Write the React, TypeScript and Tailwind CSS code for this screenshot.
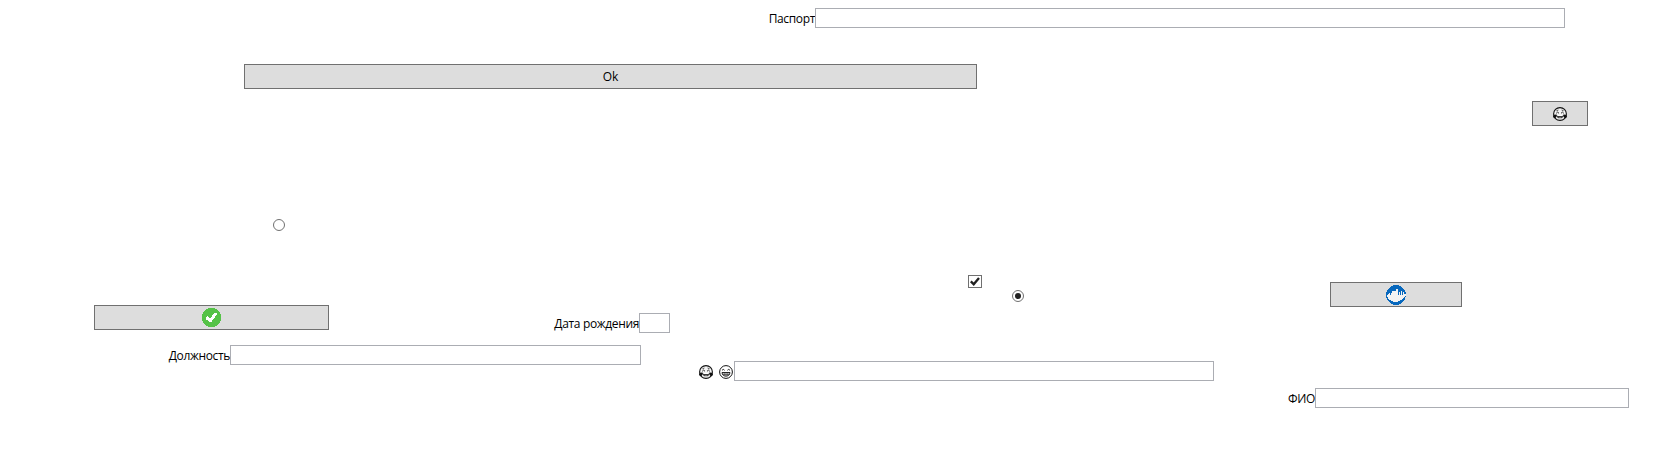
import type { ReactNode } from "react";

function Button({ className, children }: { className: string; children: ReactNode }) {
  return (
    <button className={`flex h-[25px] shrink-0 items-center justify-center border border-[#707070] bg-[#dddddd] ${className}`}>
      {children}
    </button>
  );
}

function Field({ className, input, label }: { className: string; input: string; label: ReactNode }) {
  return (
    <label className={`flex h-5 shrink-0 items-start justify-end ${className}`}>
      <span className="flex h-5 items-center whitespace-nowrap pt-px tracking-[-0.35px]">{label}</span>
      <input type="text" className={`h-5 shrink-0 border border-[#abadb3] bg-white outline-none ${input}`} />
    </label>
  );
}

function Laugh() {
  return (
    <svg className="size-[14px]" viewBox="0 0 14 14" fill="none" stroke="#111">
      <circle cx="7" cy="7" r="6.4" fill="#f4f4f4" strokeWidth="1.1" />
      <path d="M3.4 3.8 L5.4 3 M8.6 3 L10.6 3.8" strokeWidth=".7" />
      <path d="M3.2 6.3 L4.6 5.1 L6 6.3 M8 6.3 L9.4 5.1 L10.8 6.3" strokeWidth=".9" />
      <path d="M3.2 8 H10.8 C10.8 12.6 3.2 12.6 3.2 8Z" fill="#333" stroke="none" />
      <path d="M4.2 8.5 H9.8" stroke="#fff" strokeWidth="1.1" />
      <path d="M4.4 11.4 Q7 9.4 9.6 11.4 Q7 12.8 4.4 11.4Z" fill="#ccc" stroke="none" />
      <path d="M0 9 Q.8 7.5 3.6 7.6 Q3.9 11 1.7 11.2 Q0 10.8 0 9Z M14 9 Q13.2 7.5 10.4 7.6 Q10.1 11 12.3 11.2 Q14 10.8 14 9Z" fill="#111" stroke="none" />
    </svg>
  );
}

function Grin() {
  return (
    <svg className="size-[14px]" viewBox="0 0 14 14" fill="none" stroke="#111">
      <circle cx="7" cy="7" r="6.4" strokeWidth="1" />
      <path d="M3 5.3 Q4.3 3.4 5.6 5.3 M8.4 5.3 Q9.7 3.4 11 5.3" strokeWidth=".9" />
      <path d="M3 7.5 H11 C10.8 12.4 3.2 12.4 3 7.5Z" fill="#fff" strokeWidth=".9" />
      <path d="M3.4 9.3 H10.6 M5.2 7.6 V10.8 M7 7.6 V11 M8.8 7.6 V10.8" strokeWidth=".6" />
    </svg>
  );
}

function Radio({ className, checked = false }: { className: string; checked?: boolean }) {
  return (
    <svg role="radio" aria-checked={checked} className={`size-3 shrink-0 ${className}`} viewBox="0 0 12 12">
      <circle cx="6" cy="6" r="5.5" fill="#fff" stroke="#707070" />
      {checked && <circle cx="6" cy="6" r="3" fill="#212121" />}
    </svg>
  );
}

export default function App() {
  return (
    <main className="flex h-[457px] w-[1672px] flex-col overflow-hidden bg-white font-['Open_Sans','Noto_Sans',sans-serif] text-[12px] leading-4 text-black">
      <Field className="mt-2 w-[1565px]" input="w-[750px]" label={<span>Паспорт</span>} />
      <Button className="mt-9 ml-[244px] w-[733px]">Ok</Button>
      <Button className="mt-3 ml-[1532px] w-14">
        <Laugh />
      </Button>
      <Radio className="mt-[93px] ml-[273px]" />

      <div className="mt-11 flex h-[70px] shrink-0 items-start">
        <Button className="mt-[30px] ml-[94px] w-[235px]">
          <svg className="size-[19px]" viewBox="0 0 19 19" shapeRendering="crispEdges">
            <circle cx="9.5" cy="9.5" r="9.7" fill="#55c247" />
            <path d="M4 10 L5.7 8.3 L8.1 10.6 L12.4 4.8 L15 5 L14.7 7 L9.2 14 L7.5 14 L4 11.2Z" fill="#fff" />
          </svg>
        </Button>
        <Field className="mt-[38px] w-[341px]" input="w-[31px]" label={<span>Дата рождения</span>} />
        <svg role="checkbox" aria-checked="true" className="ml-[298px] h-[13px] w-[14px] shrink-0" viewBox="0 0 14 13">
          <rect x=".5" y=".5" width="13" height="12" fill="#fff" stroke="#707070" />
          <path d="M2.8 6.4 L5.7 9.2 L11 2.9" fill="none" stroke="#212121" strokeWidth="2.3" />
        </svg>
        <Radio className="mt-[15px] ml-[30px]" checked />
        <Button className="mt-[7px] ml-[306px] w-[132px]">
          <svg className="size-5" viewBox="0 0 20 20" shapeRendering="crispEdges">
            <circle cx="10" cy="10" r="10" fill="#0868bd" />
            <path
              d="M2 9 H3 V8 H4 V10 H5 V8 H6 V6 H10 V4 H12 V10 H13 V7 H14 V10 H15 V6 H16 V10 H17 V7 H18 V9 H20 V11 H19 V12 H18 V13 H17 V14 H16 V15 H14 V16 H12 V17 H7 V16 H5 V15 H3 V14 H2 V12 H1 V10 H2Z"
              fill="#f2f2f2"
            />
          </svg>
        </Button>
      </div>

      <div className="flex shrink-0 items-start">
        <Field className="w-[641px]" input="w-[411px]" label={<span>Должность</span>} />
        <Field
          className="mt-4 w-[573px]"
          input="w-[480px]"
          label={
            <span className="mr-px flex gap-1.5 pt-px">
              <Laugh />
              <Grin />
            </span>
          }
        />
        <Field className="mt-[43px] w-[415px]" input="w-[314px]" label={<span>ФИО</span>} />
      </div>
    </main>
  );
}
